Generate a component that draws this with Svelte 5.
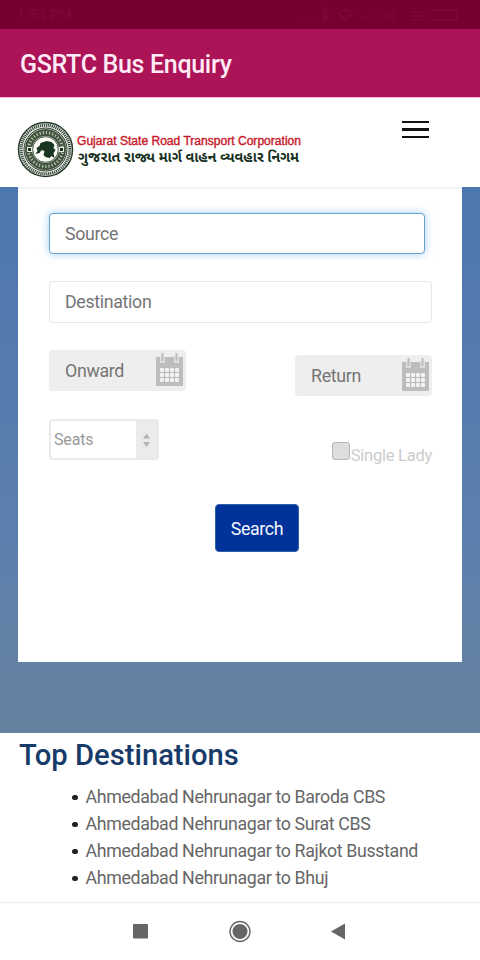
<script>
  const destinations = [
    'Ahmedabad Nehrunagar to Baroda CBS',
    'Ahmedabad Nehrunagar to Surat CBS',
    'Ahmedabad Nehrunagar to Rajkot Busstand',
    'Ahmedabad Nehrunagar to Bhuj'
  ]

  const calendarDots = [0, 1, 2, 3]
  let source = ''
  let destination = ''
  let onward = ''
  let returning = ''
  let singleLady = false
</script>

{#snippet calendar()}
  <svg class='calendar' width='27' height='35' viewBox='0 0 27 35'>
    <path fill='#bdbdbd' d='M0 5h4v5h5V5h9v5h5V5h4v29H0z' />
    <path fill='#dedede' d='M4 4h5v7H4zM18 4h5v7h-5z' />
    <path fill='#bdbdbd' d='M5.5 1h2v8h-2zM19.5 1h2v8h-2z' />
    {#each [0, 1, 2] as row}
      {#each calendarDots as col}
        <rect x={4 + col * 5} y={16 + row * 5} width='4' height='4' rx='1' fill='#f2f2f2' />
      {/each}
    {/each}
  </svg>
{/snippet}

<div class='screen'>
  <div class='status'>
    <span>1:53 PM</span>
    <svg width='164' height='16' viewBox='0 0 164 16'>
      <g fill='none' stroke='#7f0936' stroke-width='1.3'>
        <path d='M2 11h2M7 11h2M12 11h4M23 4l6 7-3 3V1l3 4-6 6' />
        <path d='M39 6q7-6 14 0l-7 7zM62 12h3M68 12V9M72 12V6M112 5h12M112 9h12M112 13h12' />
        <rect x='133' y='3' width='25' height='10' rx='2' />
      </g>
      <text x='82' y='13' fill='#7f0936' font-size='12'>4G</text>
    </svg>
  </div>
  <div class='appbar'>GSRTC Bus Enquiry</div>

  <header>
    <svg class='logo' width='300' height='60' viewBox='0 0 300 60'>
      <circle cx='29.5' cy='29.5' r='27' fill='#f3f6ee' stroke='#26382a' stroke-width='1.5' />
      <circle cx='29.5' cy='29.5' r='24.3' fill='none' stroke='#33453a' stroke-width='3' stroke-dasharray='1.2 .8' />
      <circle cx='29.5' cy='29.5' r='21.5' fill='#dce2d5' stroke='#26382a' stroke-width='1' />
      <circle cx='29.5' cy='29.5' r='17' fill='none' stroke='#42543f' stroke-width='7' />
      <circle cx='29.5' cy='29.5' r='17' fill='none' stroke='#b7c3af' stroke-width='3' stroke-dasharray='1.2 2' />
      <circle cx='29.5' cy='29.5' r='12.8' fill='#fbfcf8' stroke='#26382a' stroke-width='.8' />
      <path fill='#e9eee3' d='M11 27h5v5h-5zM43 27h5v5h-5z' />
      <path fill='#19351f' d='M12 28h3v3h-3zM44 28h3v3h-3z' />
      <path fill='#19351f' d='M20.5 28l3-2 1-3 6-2 5 1 3 3-1 3 2 2-2 3 1 5-3-2-2 2-4-1-2-2 1-4-3-1-2 3-4 1 2-3z' />
      <text class='logo-en' x='61' y='25' textLength='224' lengthAdjust='spacingAndGlyphs'>Gujarat State Road Transport Corporation</text>
      <text class='logo-gu' x='62' y='41.5' textLength='221' lengthAdjust='spacingAndGlyphs'>ગુજરાત રાજ્ય માર્ગ વાહન વ્યવહાર નિગમ</text>
    </svg>
    <button class='menu' aria-label='Menu'><i></i><i></i><i></i></button>
  </header>

  <main>
    <form>
      <input class='field source' placeholder='Source' bind:value={source} />
      <input class='field' placeholder='Destination' bind:value={destination} />
      <div class='dates'>
        <label class='date'>
          <input placeholder='Onward' bind:value={onward} />
          {@render calendar()}
        </label>
        <label class='date return'>
          <input placeholder='Return' bind:value={returning} />
          {@render calendar()}
        </label>
      </div>
      <div class='options'>
        <div class='seats'>
          <span>Seats</span>
          <svg width='21' height='37' viewBox='0 0 21 37'>
            <path fill='#b5b5b5' d='M7 17.5L10.5 12.5l3.5 5zM7 21h7l-3.5 5z' />
          </svg>
        </div>
        <label class='lady'>
          <input type='checkbox' bind:checked={singleLady} />
          <span>Single Lady</span>
        </label>
      </div>
      <button class='search' type='button'>Search</button>
    </form>
  </main>

  <section>
    <h2>Top Destinations</h2>
    <ul>
      {#each destinations as name}
        <li>{name}</li>
      {/each}
    </ul>
  </section>

  <nav>
    <svg width='480' height='57' viewBox='0 0 480 57'>
      <g fill='#666'>
        <rect x='133' y='21' width='15' height='14.5' rx='1' />
        <circle cx='240' cy='28.5' r='7.5' />
        <circle cx='240' cy='28.5' r='10' fill='none' stroke='#666' stroke-width='1.4' />
        <path d='M331 28.5L345 20.5v16z' />
      </g>
    </svg>
  </nav>
</div>

<style>
  :global(body) {
    margin: 0;
    overflow: hidden;
  }

  .screen {
    display: flex;
    flex-direction: column;
    width: 480px;
    height: 960px;
    background: #fff;
    font-family: Roboto, sans-serif;
  }

  .screen, .screen * {
    box-sizing: border-box;
  }

  input, button {
    font-family: inherit;
    margin: 0;
  }

  .status {
    display: flex;
    justify-content: space-between;
    align-items: center;
    height: 29px;
    padding: 1px 17px 0;
    background: #780030;
    color: #7f0936;
    font-size: 15px;
  }

  .appbar {
    height: 69px;
    padding-left: 20px;
    border-bottom: 1px solid #f2b5d0;
    background: #ad1457;
    color: #ffeaf6;
    font-size: 25px;
    font-weight: 500;
    line-height: 72px;
    letter-spacing: -.32px;
  }

  header {
    display: flex;
    justify-content: space-between;
    height: 89px;
    padding: 22px 51px 0 16px;
  }

  .logo {
    flex: none;
  }

  .logo-en {
    fill: #c71b2d;
    stroke: #c71b2d;
    stroke-width: .4px;
    font: 12px 'Liberation Sans', sans-serif;
  }

  .logo-gu {
    fill: #153020;
    font: bold 14px 'Noto Sans Gujarati', 'Noto Sans', sans-serif;
  }

  .menu {
    display: flex;
    flex-direction: column;
    justify-content: flex-start;
    gap: 5px;
    width: 27px;
    height: 22px;
    padding: 1px 0 0;
    border: 0;
    background: none;
  }

  .menu i {
    width: 27px;
    height: 2.4px;
    background: #111;
  }

  main {
    height: 546px;
    padding: 0 18px;
    background: linear-gradient(#4d77af, #5c80ad 65%, #66819f);
  }

  form {
    display: flex;
    flex-direction: column;
    height: 475px;
    padding: 26px 30px 0 31px;
    border-top: 2px solid #f2f5f5;
    background: #fff;
  }

  .field {
    height: 42px;
    flex: none;
    padding: 0 15px 1px;
    border: 1px solid #e4e6e8;
    border-radius: 4px;
    font-size: 17.8px;
    letter-spacing: -.33px;
    outline: none;
  }

  input::placeholder {
    color: #757575;
    opacity: 1;
  }

  .source {
    width: 376px;
    margin: -2px 0 27px;
    height: 41px;
    border-color: #66a0cb;
    box-shadow: 0 0 8px rgba(102, 175, 233, .6);
  }

  .dates {
    display: flex;
    justify-content: space-between;
    margin-top: 27px;
  }

  .date {
    display: flex;
    align-items: flex-start;
    width: 137px;
    height: 41px;
    padding-right: 3px;
    border-radius: 4px;
    background: #eee;
  }

  .date input {
    flex: 1;
    min-width: 0;
    height: 41px;
    padding: 0 0 1px 16px;
    border: 0;
    background: none;
    font-size: 17.8px;
    letter-spacing: -.33px;
  }

  .calendar {
    margin-top: 2px;
  }

  .return {
    margin-top: 5px;
  }

  .options {
    display: flex;
    justify-content: space-between;
    height: 42px;
    margin-top: 23px;
  }

  .seats {
    display: flex;
    align-items: center;
    width: 110px;
    height: 41px;
    border: 2px solid #eaeaea;
    border-radius: 4px;
    color: #999;
    font-size: 16px;
    letter-spacing: -.15px;
  }

  .seats span {
    flex: 1;
    padding-left: 3px;
  }

  .seats svg {
    background: #ebebeb;
  }

  .lady {
    display: flex;
    align-items: flex-start;
    height: 42px;
    margin-top: 23px;
    color: #ccc;
    font-size: 16.5px;
    letter-spacing: -.25px;
  }

  .lady span {
    margin: 4px 0 0 1px;
  }

  .lady input {
    appearance: none;
    width: 18px;
    height: 18px;
    border: 1.5px solid #b5b5b5;
    border-radius: 3px;
    background: #ddd;
  }

  .search {
    width: 84px;
    height: 48px;
    flex: none;
    margin: 43px 0 0 166px;
    padding: 0;
    border: 1px solid #2f60a8;
    border-radius: 4px;
    background: #003399;
    color: #f4f7ff;
    font-size: 17.8px;
    letter-spacing: -.33px;
  }

  section {
    height: 169px;
    padding-left: 19px;
    overflow: hidden;
  }

  h2 {
    margin: 4px 0 9px;
    color: #173b69;
    font-size: 29.2px;
    font-weight: 500;
    line-height: 37px;
  }

  ul {
    margin: 0;
    padding-left: 53px;
    list-style: none;
  }

  li {
    display: flex;
    align-items: center;
    gap: 8px;
    height: 27px;
    color: #666;
    font-size: 17.8px;
    letter-spacing: -.36px;
  }

  li::before {
    content: '';
    width: 5.5px;
    height: 5.5px;
    margin-top: 2px;
    border-radius: 50%;
    background: #222;
  }

  nav {
    height: 58px;
    border-top: 1px solid #eee;
  }
</style>
